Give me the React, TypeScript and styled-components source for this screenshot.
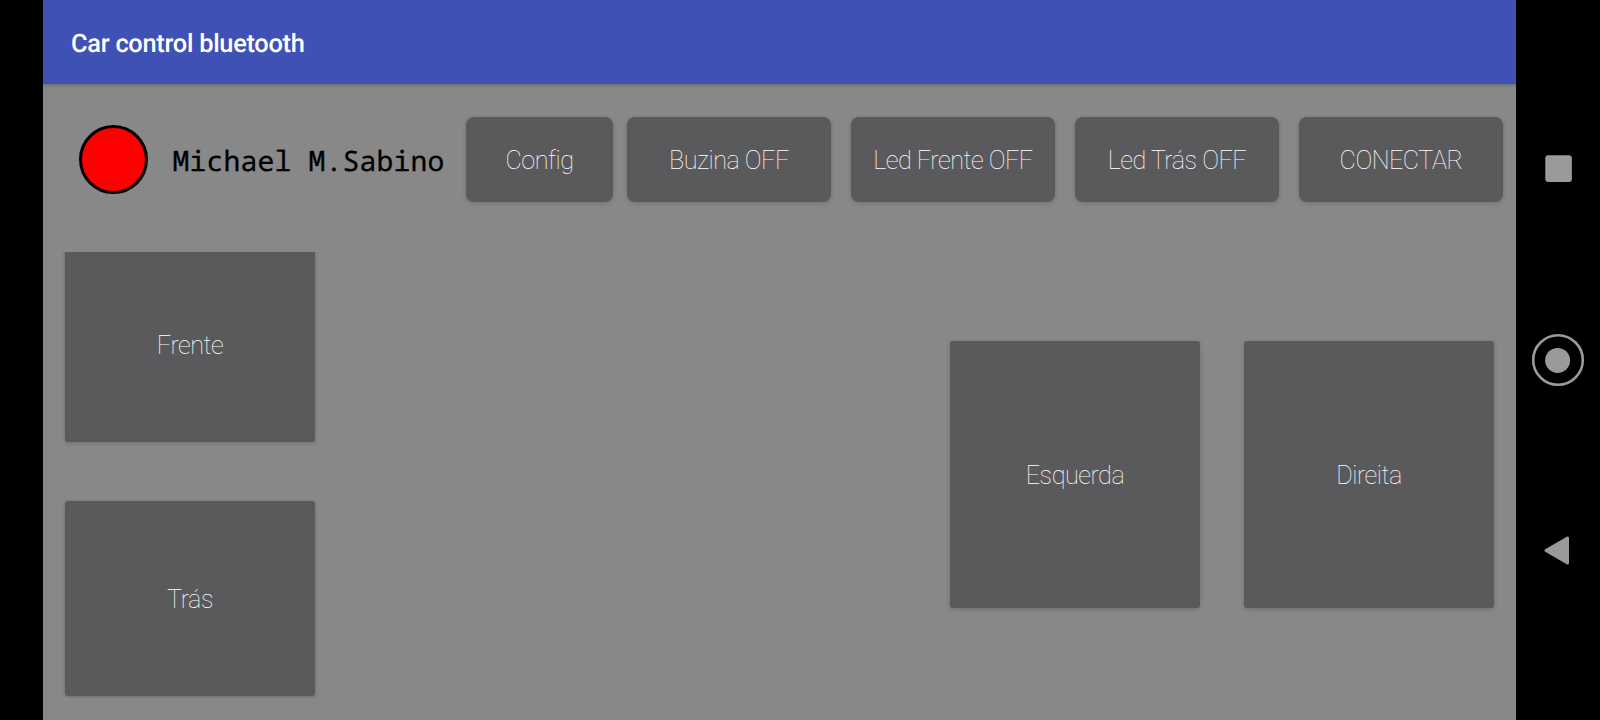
import React from "react";
import styled, { createGlobalStyle } from "styled-components";

const GlobalStyle = createGlobalStyle`
  *, *::before, *::after { box-sizing: border-box; }
  body { margin: 0; background: #000; font-family: Roboto, sans-serif; text-rendering: geometricPrecision; }
`;

const Screen = styled.div`
  display: flex;
  width: 1600px;
  height: 720px;
  padding-left: 43px;
  background: #000;
  overflow: hidden;
`;

const Activity = styled.main`
  display: flex;
  flex-direction: column;
  width: 1473px;
  background: #888888;
`;

const AppBar = styled.header`
  display: flex;
  align-items: center;
  flex: none;
  height: 84px;
  padding: 4px 28px 0;
  background: #3f51b5;
  box-shadow: 0 1px 4px rgba(0, 0, 0, 0.22);
`;

const Title = styled.h1`
  margin: 0;
  color: #fff;
  font-size: 25.4px;
  font-weight: 500;
  line-height: 30px;
  letter-spacing: -0.29px;
  white-space: nowrap;
`;

const Toolbar = styled.section`
  display: flex;
  align-items: center;
  flex: none;
  height: 85px;
  margin-top: 33px;
  padding-left: 36px;
`;

const StatusLight = styled.div`
  flex: none;
  width: 69px;
  height: 69px;
  border: 3px solid #000;
  border-radius: 50%;
  background: #f00;
`;

const Author = styled.span`
  flex: none;
  width: 293.5px;
  margin-left: 24.5px;
  padding-top: 3px;
  color: #000;
  font-family: "Noto Sans Mono", "DejaVu Sans Mono", monospace;
  font-size: 28px;
  line-height: 34px;
  letter-spacing: 0.2px;
  -webkit-text-stroke: 0.3px #000;
  white-space: pre;
`;

const Actions = styled.div`
  display: flex;
  gap: 20px;
  margin-left: 14px;
`;

const BaseButton = styled.button`
  display: flex;
  align-items: center;
  justify-content: center;
  flex: none;
  padding: 2px 0 0;
  border: 0;
  background: #5a5a5c;
  color: #fff;
  font-family: Roboto, sans-serif;
  font-size: 25.2px;
  font-weight: 100;
  letter-spacing: -0.5px;
  white-space: nowrap;
  box-shadow: 0 1px 4px rgba(0, 0, 0, 0.2);
`;

const ToolButton = styled(BaseButton)<{ $compact?: boolean }>`
  width: ${(p) => (p.$compact ? 147 : 204)}px;
  height: 85px;
  border-radius: 8px;
`;

const DriveButton = styled(BaseButton)<{ $height: number }>`
  width: 250px;
  height: ${(p) => p.$height}px;
  border-radius: 3px;
`;

const Controls = styled.section`
  display: flex;
  justify-content: space-between;
  flex: none;
  height: 444px;
  margin-top: 50px;
  padding-right: 22px;
`;

const ThrottleColumn = styled.div`
  display: flex;
  flex-direction: column;
  justify-content: flex-end;
  gap: 59px;
  width: 280px;
  height: 446px;
  padding: 0 0 2px 22px;
  overflow: hidden;
`;

const SteeringRow = styled.div`
  display: flex;
  align-items: flex-start;
  gap: 44px;
  padding-top: 89px;
`;

const NavBar = styled.nav`
  width: 84px;
  flex: none;
  background: #000;
`;

export default function App() {
  return (
    <>
      <GlobalStyle />
      <Screen>
        <Activity>
          <AppBar>
            <Title>Car control bluetooth</Title>
          </AppBar>
          <Toolbar>
            <StatusLight />
            <Author>Michael M.Sabino</Author>
            <ToolButton $compact>Config</ToolButton>
            <Actions>
              <ToolButton>Buzina OFF</ToolButton>
              <ToolButton>Led Frente OFF</ToolButton>
              <ToolButton>Led Trás OFF</ToolButton>
              <ToolButton>CONECTAR</ToolButton>
            </Actions>
          </Toolbar>
          <Controls>
            <ThrottleColumn>
              <DriveButton $height={195}>Frente</DriveButton>
              <DriveButton $height={195}>Trás</DriveButton>
            </ThrottleColumn>
            <SteeringRow>
              <DriveButton $height={267}>Esquerda</DriveButton>
              <DriveButton $height={267}>Direita</DriveButton>
            </SteeringRow>
          </Controls>
        </Activity>
        <NavBar>
          <svg width="84" height="720" viewBox="0 0 84 720" fill="#9a9a9a">
            <rect x="29.3" y="155.2" width="26.6" height="26.8" rx="3" />
            <circle cx="42" cy="360" r="24.8" fill="none" stroke="#9a9a9a" strokeWidth="2.6" />
            <circle cx="41.6" cy="360.4" r="12.5" />
            <path
              d="M30 550.5 L51.5 538 V563 Z"
              stroke="#9a9a9a"
              strokeWidth="3"
              strokeLinejoin="round"
            />
          </svg>
        </NavBar>
      </Screen>
    </>
  );
}
